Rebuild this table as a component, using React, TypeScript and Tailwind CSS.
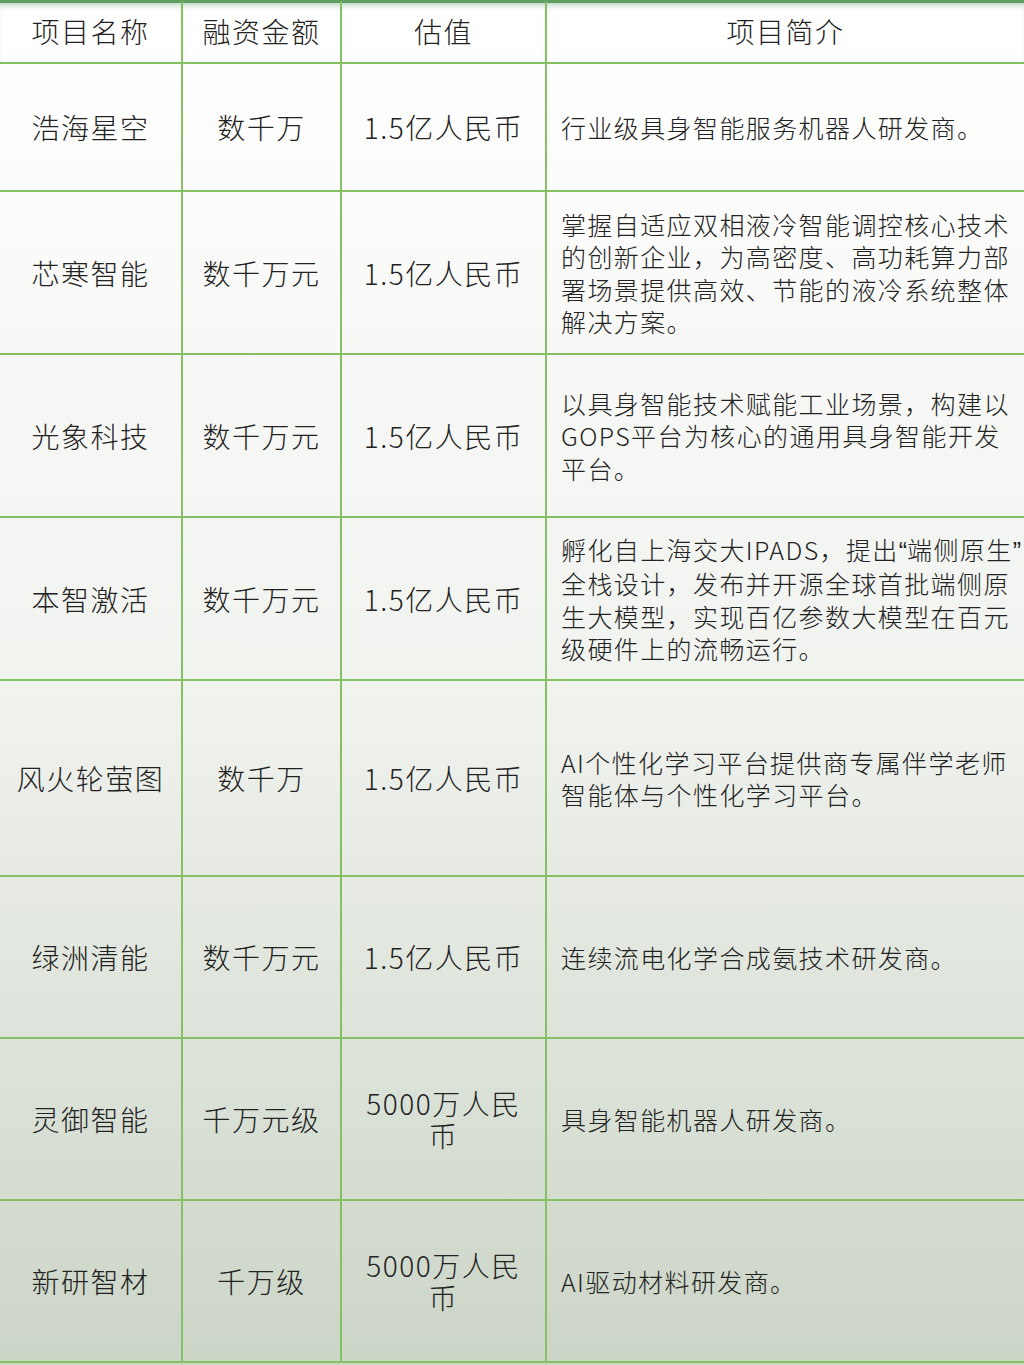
import type { ReactNode } from "react";

const FONT = '"Noto Sans CJK SC", "Noto Sans", sans-serif';

interface Row {
  name: string;
  amount: string;
  value: string[];
  intro: ReactNode[];
  height: string;
}

// Narrow Latin quotes, like the source's rendering.
const Q = ({ c }: { c: string }) => (
  <span style={{ fontFamily: '"Liberation Sans", sans-serif' }} className="tracking-normal">
    {c}
  </span>
);

const ROWS: Row[] = [
  { name: "浩海星空", amount: "数千万", value: ["1.5亿人民币"], intro: ["行业级具身智能服务机器人研发商。"], height: "h-[128px]" },
  {
    name: "芯寒智能",
    amount: "数千万元",
    value: ["1.5亿人民币"],
    intro: ["掌握自适应双相液冷智能调控核心技术", "的创新企业，为高密度、高功耗算力部", "署场景提供高效、节能的液冷系统整体", "解决方案。"],
    height: "h-[163px]",
  },
  {
    name: "光象科技",
    amount: "数千万元",
    value: ["1.5亿人民币"],
    intro: ["以具身智能技术赋能工业场景，构建以", "GOPS平台为核心的通用具身智能开发", "平台。"],
    height: "h-[163px]",
  },
  {
    name: "本智激活",
    amount: "数千万元",
    value: ["1.5亿人民币"],
    intro: [
      <>
        孵化自上海交大IPADS，提出<Q c="“" />端侧原生<Q c="”" />
      </>,
      "全栈设计，发布并开源全球首批端侧原",
      "生大模型，实现百亿参数大模型在百元",
      "级硬件上的流畅运行。",
    ],
    height: "h-[163px]",
  },
  {
    name: "风火轮萤图",
    amount: "数千万",
    value: ["1.5亿人民币"],
    intro: ["AI个性化学习平台提供商专属伴学老师", "智能体与个性化学习平台。"],
    height: "h-[196px]",
  },
  { name: "绿洲清能", amount: "数千万元", value: ["1.5亿人民币"], intro: ["连续流电化学合成氨技术研发商。"], height: "h-[162px]" },
  { name: "灵御智能", amount: "千万元级", value: ["5000万人民", "币"], intro: ["具身智能机器人研发商。"], height: "h-[162px]" },
  { name: "新研智材", amount: "千万级", value: ["5000万人民", "币"], intro: ["AI驱动材料研发商。"], height: "h-[162px]" },
];

const base = "flex items-center border-b-2 border-[#86c064]";
const cell = `${base} border-r-2`;
const big = "text-[28px] tracking-[1.5px] text-[#222] font-light";
const head =
  "h-[64px] justify-center pb-[4px] border-t-[3px] border-t-[#5f9e5e] shadow-[inset_0_6px_6px_-4px_rgba(80,150,110,0.45)]";

export default function App() {
  return (
    <div
      className="w-[1024px] h-[1365px] overflow-hidden bg-gradient-to-b from-[#ffffff] via-[#f1f3ef] to-[#cbd5c6]"
      style={{ fontFamily: FONT }}
    >
      <div className="grid grid-cols-[183px_159px_205px_1fr]">
        {/* header */}
        <div className={`${cell} ${head} ${big}`}>项目名称</div>
        <div className={`${cell} ${head} ${big}`}>融资金额</div>
        <div className={`${cell} ${head} ${big}`}>估值</div>
        <div className={`${base} ${head} ${big}`}>项目简介</div>

        {ROWS.map((r) => (
          <div key={r.name} className="contents">
            <div className={`${cell} ${r.height} justify-center ${big}`}>{r.name}</div>
            <div className={`${cell} ${r.height} justify-center ${big}`}>{r.amount}</div>
            <div className={`${cell} ${r.height} flex-col justify-center text-center leading-[32px] ${big}`}>
              {r.value.map((v) => (
                <div key={v} className="whitespace-nowrap">{v}</div>
              ))}
            </div>
            <div className={`${base} ${r.height} pl-[14px] text-[25px] tracking-[1.4px] leading-[32.5px] text-[#222] font-light`}>
              <div>
                {r.intro.map((l, i) => (
                  <div key={i} className="whitespace-nowrap">{l}</div>
                ))}
              </div>
            </div>
          </div>
        ))}
      </div>
    </div>
  );
}
